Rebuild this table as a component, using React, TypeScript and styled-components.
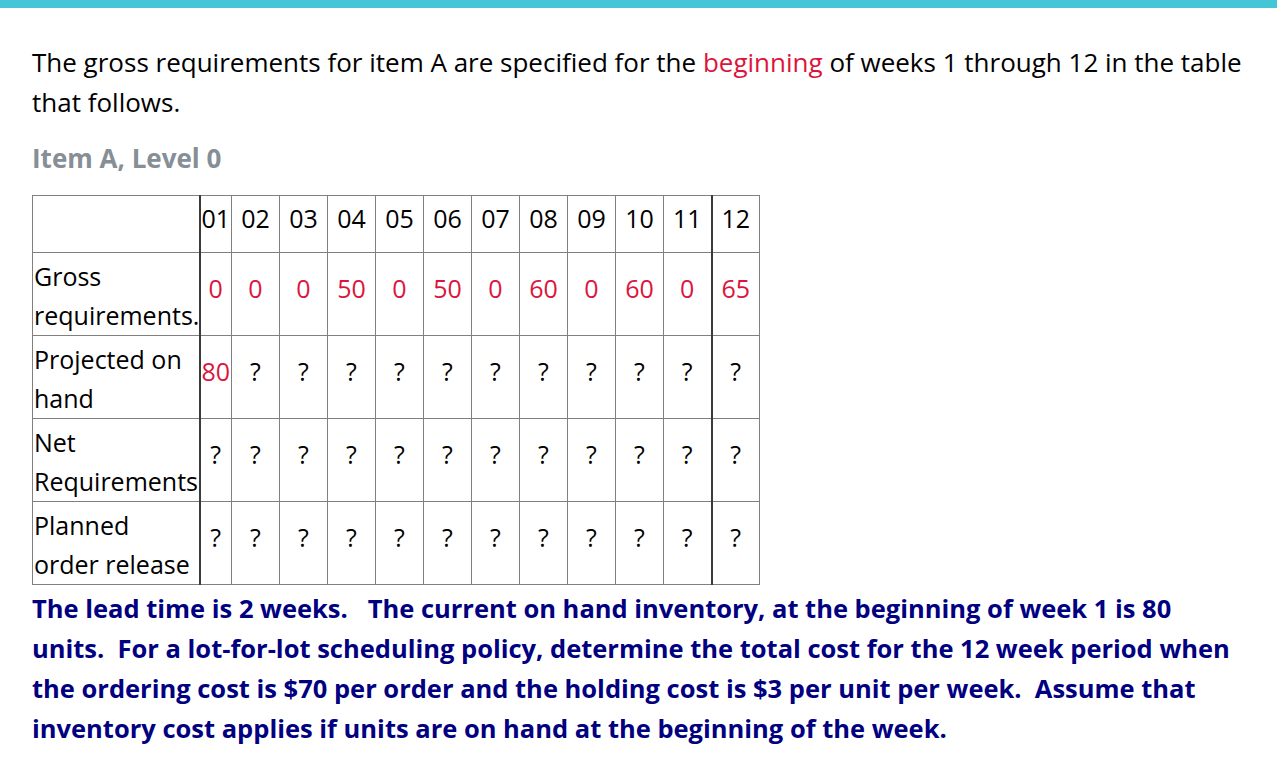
import styled, { createGlobalStyle } from 'styled-components';

const GlobalStyle = createGlobalStyle`
    body {
        margin: 0;
        background: #fff;
        font-family: "Open Sans", "Noto Sans", sans-serif;
        color: #000;
    }
`

const TopBar = styled.div`
    height: 8px;
    background: #45c6d6;
`
const Content = styled.div`
    padding: 0 32px;
    font-size: 26px;
`
const Intro = styled.p`
    margin: 34px 0 0;
    line-height: 40px;
`
const Accent = styled.span`
    color: #dc143c;
`
const ItemHeading = styled.h3`
    margin: 18px 0 19px;
    font-size: 26px;
    line-height: 36px;
    color: #868e96;
    font-weight: 700;
`
const Grid = styled.table`
    border-collapse: collapse;
    table-layout: fixed;
    width: 728px;
    font-size: 25px;
`
const Col = styled.col<{ $w: number }>`
    width: ${p => p.$w}px;
`
const Cell = styled.td<{ $strong?: boolean; $red?: boolean }>`
    border: 1px solid #808080;
    border-left: ${p => p.$strong ? '2px solid #3a3a3a' : '1px solid #808080'};
    padding: 0 1px 12px;
    text-align: center;
    vertical-align: middle;
    line-height: 40px;
    color: ${p => p.$red ? '#dc143c' : '#000'};
    white-space: nowrap;
`
const LabelCell = styled.td`
    border: 1px solid #808080;
    padding: 3px 1px 0;
    text-align: left;
    vertical-align: middle;
    line-height: 39px;
    white-space: nowrap;
`
const HeadRow = styled.tr`
    height: 57px;
`
const BodyRow = styled.tr`
    height: 83px;
`
const Question = styled.p`
    margin: 3px 0 0;
    color: #000080;
    font-size: 25.5px;
    font-weight: 700;
    line-height: 40px;
`

const weeks = ['01', '02', '03', '04', '05', '06', '07', '08', '09', '10', '11', '12'];
const gross = ['0', '0', '0', '50', '0', '50', '0', '60', '0', '60', '0', '65'];

const rows = [
    { label: ['Gross', 'requirements.'], values: gross, red: () => true },
    { label: ['Projected on', 'hand'], values: ['80', ...Array(11).fill('?')], red: (i: number) => i === 0 },
    { label: ['Net', 'Requirements'], values: Array(12).fill('?'), red: () => false },
    { label: ['Planned', 'order release'], values: Array(12).fill('?'), red: () => false },
];

const App = () => {
    return (
        <>
            <GlobalStyle />
            <TopBar />
            <Content>
                <Intro>
                    The gross requirements for item A are specified for the <Accent>beginning</Accent> of weeks 1 through 12 in the table that follows.
                </Intro>
                <ItemHeading>Item A, Level 0</ItemHeading>
                <Grid>
                    <colgroup>
                        <Col $w={167} />
                        {weeks.map((w, i) => <Col key={w} $w={i === 0 ? 32 : 48} />)}
                    </colgroup>
                    <tbody>
                        <HeadRow>
                            <LabelCell></LabelCell>
                            {weeks.map((w, i) => (
                                <Cell key={w} $strong={i === 0 || i === 11}>{w}</Cell>
                            ))}
                        </HeadRow>
                        {rows.map(r => (
                            <BodyRow key={r.label[0]}>
                                <LabelCell>{r.label[0]}<br />{r.label[1]}</LabelCell>
                                {r.values.map((v, i) => (
                                    <Cell key={i} $strong={i === 0 || i === 11} $red={r.red(i)}>{v}</Cell>
                                ))}
                            </BodyRow>
                        ))}
                    </tbody>
                </Grid>
                <Question>
                    The lead time is 2 weeks.&nbsp;&nbsp; The current on hand inventory, at the beginning of week 1 is 80 units.&nbsp; For a lot-for-lot scheduling policy, determine the total cost for the 12 week period when the ordering cost is $70 per order and the holding cost is $3 per unit per week.&nbsp; Assume that inventory cost applies if units are on hand at the beginning of the week.
                </Question>
            </Content>
        </>
    );
}

export default App;
